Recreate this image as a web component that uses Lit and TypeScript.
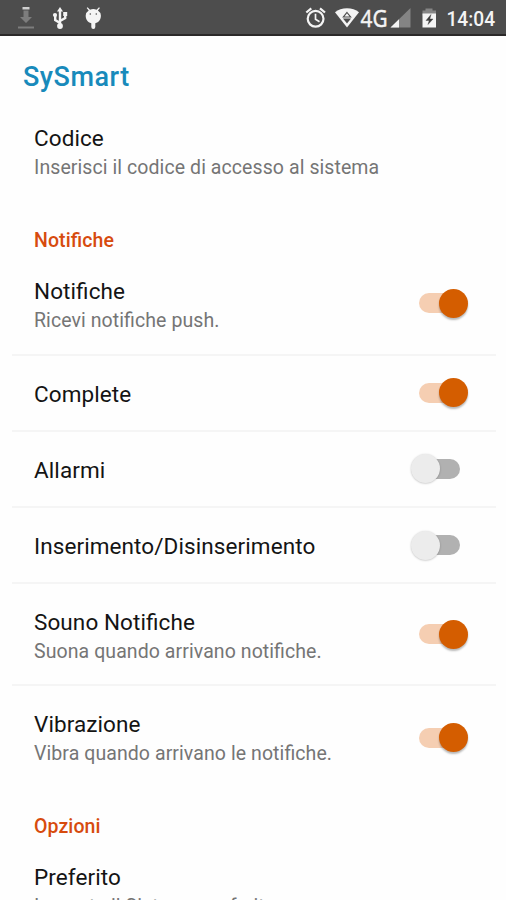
import { LitElement, html, css, svg, nothing } from "lit";
import { customElement, property } from "lit/decorators.js";

@customElement("status-bar")
class StatusBar extends LitElement {
  static styles = css`
    :host {
      display: block;
      height: 36px;
      box-sizing: border-box;
      background: #4d4d4d;
      border-bottom: 2px solid #2b2929;
      font-family: Roboto, sans-serif;
    }
    svg {
      display: block;
      width: 100%;
      height: 34px;
    }
    .net {
      font: 400 23.5px "Noto Sans", sans-serif;
      fill: #f4f4f4;
      stroke: #f4f4f4;
      stroke-width: 0.4px;
    }
    .time {
      font: 500 20px Roboto, sans-serif;
      fill: #f4f4f4;
    }
  `;
  render() {
    return html`<svg viewBox="0 0 506 34">
      ${svg`
      <path d="M22.5 7h7v2.500h-7z" fill="#d0d0d0"/>
      <path d="M23.500 10.500h5v6.500h3.500L26 23l-6-6h3.500z" fill="#7d7d7d"/>
      <path d="M18 26.500h16v2H18z" fill="#7d7d7d"/>
      <g fill="none" stroke="#f4f4f4" stroke-width="2.400">
        <path d="M60 11v15M60 23l-4.800-3v-4M60 21l5.200-3v-4"/>
      </g>
      <g fill="#f4f4f4">
        <path d="M60 7l3 4.500h-6z"/><circle cx="60" cy="26" r="2.900"/>
        <circle cx="55" cy="15" r="2.100"/><path d="M63.200 12h4v4h-4z"/>
        <path d="M85.700 15.500a7.500 6.500 0 0 1 3-5l-2-2.500.9-.7 2.400 2.500a7.500 7 0 0 1 6.600 0L99 7.300l.9.700-2 2.500a7.500 6.500 0 0 1 3 5c0 4-2 7-5.600 7.700V27a2 2 0 0 1-4 0v-3.800C87.700 22.500 85.700 19.500 85.700 15.500z"/>
      </g>
      <g fill="#4d4d4d"><circle cx="90.300" cy="14" r=".8"/><circle cx="96.300" cy="14" r=".8"/></g>
      <g fill="none" stroke="#f4f4f4" stroke-width="2.200">
        <circle cx="315.600" cy="18.800" r="7.900"/>
        <path d="M315.500 13.700v5.500l4 2.500" stroke-width="1.700"/>
        <path d="M306.300 12.500l5-4.200M325 12.500l-5-4.200"/>
      </g>
      <path d="M335 12.300C341 7 353 7 359 12.300L347 27.500z" fill="#f4f4f4"/>
      <path d="M347 12.500l3.600 4.500h-7.200z" fill="none" stroke="#4d4d4d" stroke-width="1.200"/>
      <path d="M343 18.500h8l-4 5z" fill="#4d4d4d"/>
      <text class="net" x="360.500" y="27" textLength="27" lengthAdjust="spacingAndGlyphs">4G</text>
      <path d="M410.500 8v19.500H390.500z" fill="#848484"/>
      <path d="M399 19.200v8.300h-8.500z" fill="#f4f4f4"/>
      <path d="M425.500 8.500h7v2h3.500v5h-13.500v-5h3z" fill="#858585"/>
      <path d="M422.500 13.500H436v14h-13.500z" fill="#f4f4f4"/>
      <path d="M431 14.500l-5 6h3.200l-1.200 4 5-5.500h-3.200z" fill="#3d3d3d" stroke="#3d3d3d" stroke-width=".4"/>
      <text class="time" x="446.500" y="26" textLength="48.500" lengthAdjust="spacingAndGlyphs">14:04</text>
      `}
    </svg>`;
  }
}

@customElement("toggle-switch")
class ToggleSwitch extends LitElement {
  @property({ type: Boolean, reflect: true }) on = false;
  static styles = css`
    :host {
      display: flex;
      align-items: center;
      width: 49px;
      height: 20px;
      margin-right: 8px;
    }
    .track {
      flex: 1;
      height: 20px;
      border-radius: 10px;
      background: #b1b1b1;
    }
    .thumb {
      width: 29px;
      height: 29px;
      flex: none;
      border-radius: 50%;
      background: #ececec;
      margin-right: -22px;
      z-index: 1;
      box-shadow: 0 0.5px 2px rgba(0, 0, 0, 0.25);
    }
    :host([on]) {
      flex-direction: row-reverse;
      margin-right: 0;
    }
    :host([on]) .thumb {
      background: #d45d00;
      margin: 0 0 0 -22px;
      box-shadow: 0 2px 2px rgba(0, 0, 0, 0.28);
    }
    :host([on]) .track {
      background: #f5ceb2;
    }
  `;
  render() {
    return html`<div class="thumb"></div><div class="track"></div>`;
  }
}

@customElement("preference-row")
class PreferenceRow extends LitElement {
  @property() label = "";
  @property() summary = "";
  @property() toggle = "";
  static styles = css`
    :host {
      display: flex;
      align-items: center;
      justify-content: space-between;
      box-sizing: border-box;
      height: 102.3px;
      margin: 0 10px 0 12px;
      padding: 0 28px 0 22px;
      white-space: nowrap;
    }
    :host([single]) {
      height: 76.2px;
    }
    :host([divided]) {
      border-bottom: 2px solid #f5f5f5;
    }
    .text {
      padding-top: 2px;
    }
    :host([divided]:not([single])) .text {
      padding-top: 4px;
    }
    .label {
      font-size: 22.5px;
      line-height: 30px;
      letter-spacing: 0.09px;
      color: #141414;
    }
    .summary {
      margin-top: 1px;
      font-size: 19.5px;
      line-height: 28px;
      letter-spacing: 0.08px;
      color: #757575;
    }
  `;
  render() {
    return html`<div class="text">
        <div class="label">${this.label}</div>
        ${this.summary ? html`<div class="summary">${this.summary}</div>` : nothing}
      </div>
      ${this.toggle
        ? html`<toggle-switch ?on=${this.toggle === "on"}></toggle-switch>`
        : nothing}`;
  }
}

const notifications = [
  { label: "Notifiche", summary: "Ricevi notifiche push.", toggle: "on" },
  { label: "Complete", summary: "", toggle: "on" },
  { label: "Allarmi", summary: "", toggle: "off" },
  { label: "Inserimento/Disinserimento", summary: "", toggle: "off" },
  { label: "Souno Notifiche", summary: "Suona quando arrivano notifiche.", toggle: "on" },
  { label: "Vibrazione", summary: "Vibra quando arrivano le notifiche.", toggle: "on" },
];

@customElement("app-root")
class AppRoot extends LitElement {
  static styles = css`
    :host {
      display: block;
      height: 900px;
      overflow: hidden;
      background: #fefefe;
      font-family: Roboto, sans-serif;
      font-feature-settings: "liga" 1;
    }
    .title {
      margin: 0;
      height: 64.5px;
      padding: 8px 0 0 23px;
      box-sizing: border-box;
      font-size: 27px;
      line-height: 66px;
      font-weight: 500;
      letter-spacing: 0.5px;
      color: #188abb;
    }
    .section {
      margin: 0;
      height: 50.5px;
      padding: 14px 0 0 34px;
      box-sizing: border-box;
      font-size: 19.5px;
      line-height: 48px;
      font-weight: 500;
      letter-spacing: 0.1px;
      color: #d74b0e;
    }
  `;
  render() {
    return html`<status-bar></status-bar>
      <h1 class="title">SySmart</h1>
      <preference-row label="Codice" summary="Inserisci il codice di accesso al sistema"></preference-row>
      <h2 class="section">Notifiche</h2>
      ${notifications.map(
        (p, i) => html`<preference-row
          label=${p.label}
          summary=${p.summary}
          toggle=${p.toggle}
          ?single=${!p.summary}
          ?divided=${i < notifications.length - 1}
        ></preference-row>`
      )}
      <h2 class="section">Opzioni</h2>
      <preference-row label="Preferito" summary="Imposta il Sistema preferito"></preference-row>`;
  }
}
